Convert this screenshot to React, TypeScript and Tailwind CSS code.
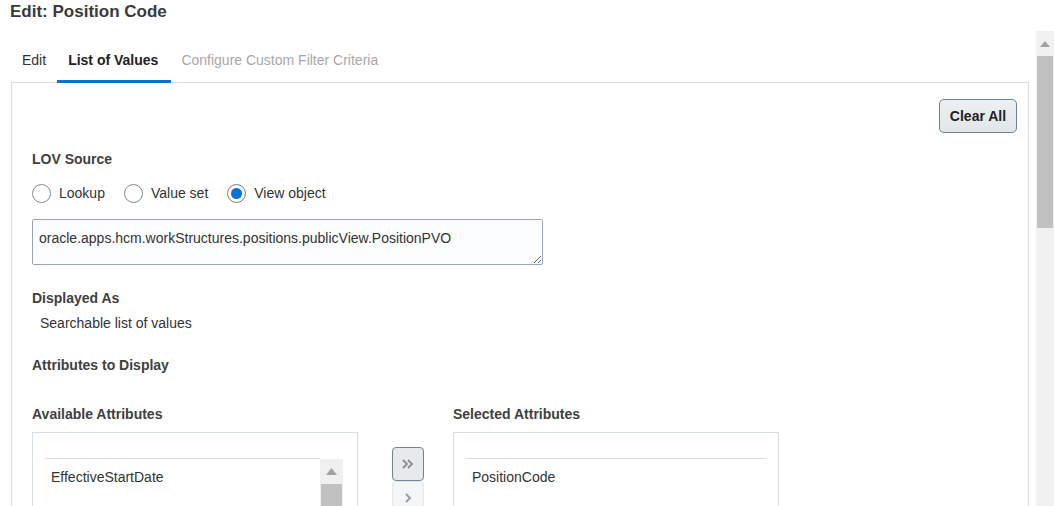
import React from 'react';

const font = { fontFamily: '"Liberation Sans", Arial, sans-serif' };

const Radio = ({ label, checked }: { label: string; checked?: boolean }) => (
  <label className="flex items-center gap-2 text-[14px] text-[#333]">
    <span
      className={`flex h-[19px] w-[19px] items-center justify-center rounded-full border bg-white ${
        checked ? 'border-[#6b7e8c]' : 'border-[#7d8b96]'
      }`}
    >
      {checked && <span className="h-[11px] w-[11px] rounded-full bg-[#0572ce]" />}
    </span>
    <span>{label}</span>
  </label>
);

// small grey scrollbar used inside the list boxes
const MiniScroll = () => (
  <div className="flex w-[23px] flex-col bg-[#f0f0f0]">
    <div className="flex h-[25px] items-center justify-center">
      <svg width="11" height="7" viewBox="0 0 11 7">
        <path d="M5.5 0 L11 7 L0 7 Z" fill="#a3a3a3" />
      </svg>
    </div>
    <div className="mx-auto h-[200px] w-[21px] bg-[#c1c1c1]" />
  </div>
);

const ListBox = ({ item, scroll }: { item: string; scroll?: boolean }) => (
  <div className="h-[150px] w-[326px] border border-[#d6dfe6] bg-white pl-3">
    <div className="mt-[25px] flex">
      <div className={scroll ? 'w-[275px]' : 'w-[300px]'}>
        <div className="border-t border-[#d6dfe6]" />
        <div className="pl-[6px] pt-[8px] text-[14px] text-[#333]">{item}</div>
      </div>
      {scroll && <div className="pt-[1px]"><MiniScroll /></div>}
    </div>
  </div>
);

const Label = ({ children }: { children: React.ReactNode }) => (
  <div className="text-[14px] font-bold leading-[16px] text-[#404040]">{children}</div>
);

export default function App() {
  return (
    <div className="h-[506px] w-[1054px] overflow-hidden bg-white" style={font}>
      <div className="h-[31px] pl-[10px] pt-[3px] text-[17px] font-bold leading-[18px] text-[#3a3a3a]">
        Edit: Position Code
      </div>
      <div className="flex">
        <div className="flex-1">
          {/* tabs */}
          <div className="flex pl-[11px] pt-[21px] text-[14px] leading-[16px]">
            <div className="px-[11px] pb-[15px] text-[#333]">Edit</div>
            <div className="border-b-[3px] border-[#0572ce] pl-[11px] pr-[13px] pb-[12px] font-bold text-[#222]">
              List of Values
            </div>
            <div className="px-[10px] pb-[15px] text-[#a8a8a8]">Configure Custom Filter Criteria</div>
          </div>
          {/* panel */}
          <div className="-mt-[1px] ml-[11px] mr-[7px] h-[500px] border border-[#d6dfe6] bg-white pl-[20px] pr-[11px] pt-[16px]">
            <div className="flex justify-end">
              <button className="h-[34px] w-[78px] rounded-[5px] border border-[#6f8394] bg-gradient-to-b from-[#edf0f2] to-[#e1e6e9] pt-[1px] text-[14px] font-bold text-[#222]">
                Clear All
              </button>
            </div>
            <div className="mt-[18px]">
              <Label>LOV Source</Label>
            </div>
            <div className="mt-[16px] flex h-[20px] items-center gap-[19px]">
              <Radio label="Lookup" />
              <Radio label="Value set" />
              <Radio label="View object" checked />
            </div>
            <textarea
              readOnly
              value="oracle.apps.hcm.workStructures.positions.publicView.PositionPVO"
              className="mt-[16px] block h-[46px] w-[511px] rounded-[2px] border border-[#98a5b0] bg-[#fcfdfe] px-[6px] pt-[10px] text-[14px] leading-[16px] text-[#333] outline-none"
              style={font}
            />
            <div className="mt-[25px]">
              <Label>Displayed As</Label>
            </div>
            <div className="mt-[9px] pl-[8px] text-[14px] leading-[16px] text-[#333]">Searchable list of values</div>
            <div className="mt-[26px]">
              <Label>Attributes to Display</Label>
            </div>
            <div className="mt-[33px] flex">
              <div>
                <Label>Available Attributes</Label>
                <div className="mt-[10px]">
                  <ListBox item="EffectiveStartDate" scroll />
                </div>
              </div>
              <div className="ml-[34px] mr-[29px] flex flex-col pt-[41px]">
                <button className="flex h-[34px] w-[32px] items-center justify-center rounded-[4px] border border-[#6f8394] bg-[#e6eaed]">
                  <svg width="12" height="10" viewBox="0 0 12 10">
                    <path d="M1 1 L5 5 L1 9 M6 1 L10 5 L6 9" stroke="#8a8a8a" strokeWidth="1.8" fill="none" />
                  </svg>
                </button>
                <button className="flex h-[34px] w-[32px] items-center justify-center rounded-[4px] border border-[#e3e7ea] bg-[#f3f5f6]">
                  <svg width="8" height="10" viewBox="0 0 8 10">
                    <path d="M2 1 L6 5 L2 9" stroke="#9a9a9a" strokeWidth="1.8" fill="none" />
                  </svg>
                </button>
              </div>
              <div>
                <Label>Selected Attributes</Label>
                <div className="mt-[10px]">
                  <ListBox item="PositionCode" />
                </div>
              </div>
            </div>
          </div>
        </div>
        {/* page scrollbar */}
        <div className="flex h-[475px] w-[18px] flex-col bg-[#f1f1f1]">
          <div className="flex h-[25px] items-center justify-center">
            <svg width="10" height="6" viewBox="0 0 10 6">
              <path d="M5 0 L10 6 L0 6 Z" fill="#a3a3a3" />
            </svg>
          </div>
          <div className="mx-auto h-[172px] w-[16px] bg-[#c1c1c1]" />
        </div>
      </div>
    </div>
  );
}
